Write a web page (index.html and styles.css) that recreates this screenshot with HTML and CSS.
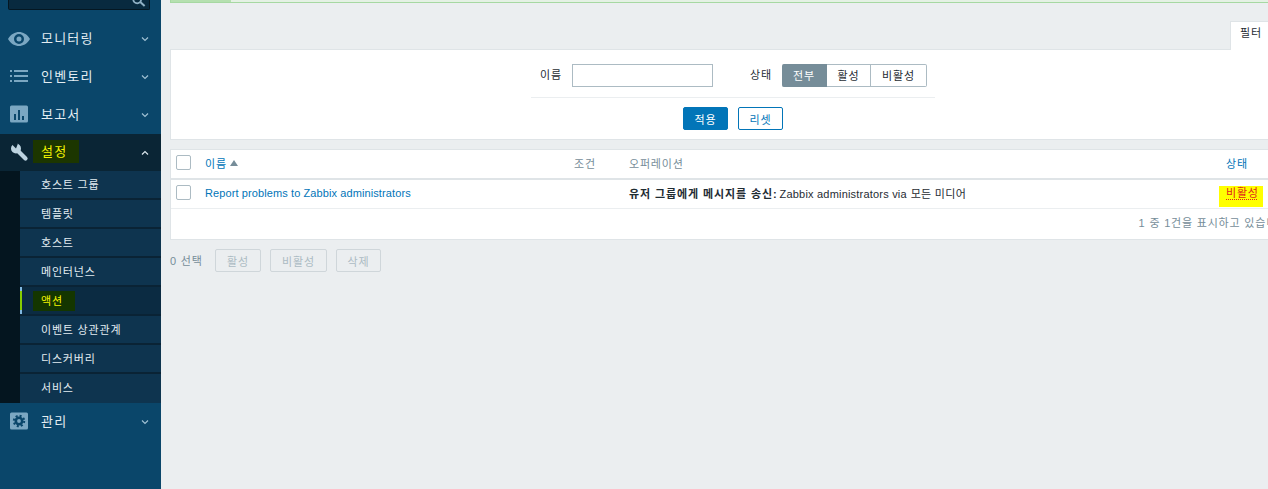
FILE: index.html
```html
<!DOCTYPE html>
<html lang="ko">
<head>
<meta charset="utf-8">
<title>액션</title>
<link rel="stylesheet" href="styles.css">
</head>
<body>
<div class="page">
  <aside class="sidebar">
    <div class="search">
      <svg class="search-icon" viewBox="0 0 16 16"><circle cx="6.500" cy="5" r="4.500" fill="none" stroke="#8fb0c4" stroke-width="2"/><path d="M10 8l5 4.500" stroke="#8fb0c4" stroke-width="2.400"/></svg>
    </div>
    <nav class="menu">
      <div class="item">
        <svg class="icon" viewBox="0 0 22 22"><path fill-rule="evenodd" d="M0 11C3 6 7 4 11 4s8 2 11 7c-3 5-7 7-11 7S3 16 0 11zm11-5a5 5 0 1 0 0 10 5 5 0 0 0 0-10zm0 2.500a2.500 2.500 0 1 1 0 5 2.500 2.500 0 0 1 0-5z" fill="#7ba7c2"/></svg>
        <span class="label">모니터링</span>
        <svg class="chev" viewBox="0 0 8 6"><path d="M1 1.500l3 3 3-3" fill="none" stroke="#9fc0d3" stroke-width="1.200"/></svg>
      </div>
      <div class="item">
        <svg class="icon icon-up" viewBox="0 0 22 22"><path d="M2 5h2v2H2zM2 10h2v2H2zM2 15h2v2H2zM6 5h14v2H6zM6 10h14v2H6zM6 15h14v2H6z" fill="#7ba7c2"/></svg>
        <span class="label">인벤토리</span>
        <svg class="chev" viewBox="0 0 8 6"><path d="M1 1.500l3 3 3-3" fill="none" stroke="#9fc0d3" stroke-width="1.200"/></svg>
      </div>
      <div class="item">
        <svg class="icon icon-up" viewBox="0 0 22 22"><rect x="2" y="2.500" width="18" height="17" rx="1.500" fill="#7ba7c2"/><path d="M6 11h2v6H6zM10 7h2v10h-2zM14 13h2v4h-2z" fill="#0a466a"/></svg>
        <span class="label">보고서</span>
        <svg class="chev" viewBox="0 0 8 6"><path d="M1 1.500l3 3 3-3" fill="none" stroke="#9fc0d3" stroke-width="1.200"/></svg>
      </div>
      <div class="item item-open">
        <svg class="icon" viewBox="0 0 22 22"><circle cx="8" cy="6.500" r="5" fill="#bcd3e0"/><path d="M8 7l9.500 9.500" stroke="#bcd3e0" stroke-width="4.200" stroke-linecap="round"/><path d="M8 6.500L4.500 3 3 .5 7 .5 10 1.500z" fill="#0a2535"/></svg>
        <span class="label"><span class="mark">설정</span></span>
        <svg class="chev" viewBox="0 0 8 6"><path d="M1 4.500l3-3 3 3" fill="none" stroke="#dbe7ee" stroke-width="1.200"/></svg>
      </div>
      <div class="submenu">
        <ul class="sublist">
          <li class="sub">호스트 그룹</li>
          <li class="sub">템플릿</li>
          <li class="sub">호스트</li>
          <li class="sub">메인터넌스</li>
          <li class="sub sub-active"><span class="mark-sub">액션</span></li>
          <li class="sub">이벤트 상관관계</li>
          <li class="sub">디스커버리</li>
          <li class="sub">서비스</li>
        </ul>
      </div>
      <div class="item">
        <svg class="icon icon-up" viewBox="0 0 22 22"><rect x="2" y="2.500" width="18" height="17" rx="1.500" fill="#7ba7c2"/><circle cx="11" cy="11" r="3.200" fill="none" stroke="#0a466a" stroke-width="2.600"/><circle cx="11" cy="11" r="5.200" fill="none" stroke="#0a466a" stroke-width="2" stroke-dasharray="2.040 2.040"/></svg>
        <span class="label">관리</span>
        <svg class="chev" viewBox="0 0 8 6"><path d="M1 1.500l3 3 3-3" fill="none" stroke="#9fc0d3" stroke-width="1.200"/></svg>
      </div>
    </nav>
  </aside>
  <main class="main">
    <div class="notice"><span class="notice-bar"></span></div>
    <div class="tabs"><span class="tab">필터</span></div>
    <section class="filter">
      <div class="filter-fields">
        <label class="flabel">이름</label>
        <input class="text-input" type="text">
        <label class="flabel flabel-status">상태</label>
        <div class="segment">
          <span class="seg seg-on">전부</span>
          <span class="seg">활성</span>
          <span class="seg">비활성</span>
        </div>
      </div>
      <div class="filter-actions">
        <button class="btn btn-primary">적용</button>
        <button class="btn btn-outline">리셋</button>
      </div>
    </section>
    <section class="table">
      <div class="row row-head">
        <span class="check"></span>
        <span class="th-link">이름 <svg class="sort" viewBox="0 0 8 6"><path d="M4 0l4 6H0z" fill="#768d99"/></svg></span>
        <span class="th">조건</span>
        <span class="th">오퍼레이션</span>
        <span class="th-link">상태</span>
      </div>
      <div class="row row-body">
        <span class="check"></span>
        <a class="name">Report problems to Zabbix administrators</a>
        <span></span>
        <span class="op"><b class="op-b">유저 그룹에게 메시지를 송신:</b> <span class="op-en">Zabbix administrators via</span> <span class="op-ko">모든 미디어</span></span>
        <span class="status"><span class="status-text">비활성</span></span>
      </div>
      <div class="table-foot">1 중 1건을 표시하고 있습니다</div>
    </section>
    <div class="actions">
      <span class="selected">0 선택</span>
      <button class="btn-off">활성</button>
      <button class="btn-off">비활성</button>
      <button class="btn-off">삭제</button>
    </div>
  </main>
</div>
</body>
</html>
```
FILE: styles.css
```css
* { box-sizing: border-box; }
html, body { margin: 0; height: 489px; overflow: hidden; }
body {
  font-family: "Liberation Sans", "Noto Sans CJK KR", sans-serif;
  font-size: 11px;
  letter-spacing: .8px;
  color: #1f2c33;
  background: #ebeef0;
}
.page { display: flex; width: 1268px; height: 489px; overflow: hidden; }

.sidebar { flex: 0 0 161px; background: #0a466a; }
.search {
  height: 10px;
  margin: 0 11px 0 8px;
  background: #082a3f;
  border: 1px solid #041722;
  border-top: 0;
  border-radius: 0 0 2px 2px;
  display: flex;
  justify-content: flex-end;
  overflow: hidden;
  padding-right: 3px;
}
.search-icon { width: 15px; height: 14px; margin-top: -5px; }
.menu { padding-top: 10px; }
.item {
  display: flex;
  align-items: center;
  height: 38px;
  padding-left: 8px;
  color: #e4edf2;
  font-size: 13px;
  letter-spacing: 1.2px;
}
.item-open { background: #0a2535; height: 37px; }
.icon { width: 22px; height: 22px; flex: none; }
.icon-up { margin-bottom: 2px; }
.label { width: 100px; margin: 0 0 4px 11px; }
.chev { width: 8px; height: 6px; flex: none; }
.mark {
  background: #1c3600;
  color: #f5f500;
  padding: 4px 12px 4px 8px;
  margin-left: -8px;
}
.submenu { background: #04151f; padding-left: 20px; }
.sublist { list-style: none; margin: 0; padding: 0; }
.sub {
  height: 29px;
  padding: 6px 0 0 21px;
  line-height: 16px;
  color: #e4edf2;
  background: #0e344f;
  border-bottom: 2px solid #0a2335;
}
.sub:last-child { border-bottom: 0; }
.sub-active {
  background:
    linear-gradient(#80b8e0 4px, #86cc00 4px, #86cc00 calc(100% - 4px), #80b8e0 calc(100% - 4px)) left top / 2px 100% no-repeat,
    #0b2b42;
}
.mark-sub {
  background: #143600;
  color: #f5f500;
  padding: 4px 12px 4px 8px;
  margin-left: -8px;
}

.main { flex: 0 0 auto; width: 1126px; margin-left: 9px; }
.notice {
  height: 3px;
  background: #e4f1e4;
  border: 1px solid #a6d8a2;
  border-top: 0;
  display: flex;
  align-items: flex-start;
}
.notice-bar { display: block; width: 60px; height: 2px; background: #b5e0b0; }
.tabs {
  display: flex;
  justify-content: flex-end;
  height: 29px;
  margin: 18px 0 -1px;
  position: relative;
  z-index: 1;
}
.tab {
  width: 66px;
  height: 29px;
  background: #fff;
  border: 1px solid #dfe4e7;
  border-bottom: 0;
  line-height: 22px;
  padding-left: 9px;
}
.filter {
  height: 91px;
  background: #fff;
  border: 1px solid #dfe4e7;
  padding-top: 14px;
  display: flex;
  flex-direction: column;
  align-items: center;
}
.filter-fields {
  width: 404px;
  height: 34px;
  border-bottom: 1px solid #ebeef0;
  display: flex;
  align-items: flex-start;
  padding-left: 9px;
}
.flabel { line-height: 23px; width: 32px; }
.flabel-status { margin-left: 37px; }
.text-input {
  width: 141px;
  height: 23px;
  border: 1px solid #acbbc3;
  background: #fff;
  padding: 0;
}
.segment { display: flex; height: 23px; }
.seg {
  height: 23px;
  line-height: 22px;
  text-align: center;
  width: 44px;
  border: 1px solid #acbbc3;
  border-left: 0;
  background: #fff;
}
.seg:last-child { width: 56px; border-radius: 0 2px 2px 0; }
.seg-on {
  width: 45px;
  background: #768d99;
  border-color: #768d99;
  color: #fff;
  border-radius: 2px 0 0 2px;
}
.filter-actions { display: flex; gap: 10px; margin-top: 9px; }
.btn {
  width: 45px;
  height: 23px;
  font: inherit;
  letter-spacing: inherit;
  padding: 0;
  border-radius: 2px;
  border: 1px solid #0275b8;
}
.btn-primary { background: #0275b8; color: #fff; }
.btn-outline { background: #fff; color: #0275b8; }

.table {
  height: 91px;
  margin-top: 9px;
  background: #fff;
  border: 1px solid #dfe4e7;
}
.row {
  display: grid;
  grid-template-columns: 34px 369px 55px 597px 1fr;
  align-items: center;
}
.row-head { height: 30px; border-bottom: 2px solid #dfe4e7; }
.row-body { height: 29px; border-bottom: 1px solid #ebeef0; }
.row-head > span:not(.check) { margin-bottom: 3px; }
.row-body > span:not(.check):not(.status), .name { margin-bottom: 2px; }
.check {
  width: 15px;
  height: 15px;
  margin: 0 0 3px 5px;
  border: 1px solid #acbbc3;
  border-radius: 2px;
  background: #fff;
}
.th { color: #768d99; }
.th-link { color: #0275b8; display: flex; align-items: center; gap: 3px; }
.sort { width: 8px; height: 6px; }
.name { color: #0275b8; letter-spacing: .1px; }
.op { white-space: nowrap; }
.op-b { letter-spacing: .9px; }
.op-en { letter-spacing: .2px; margin-left: -2px; }
.op-ko { letter-spacing: .3px; }
.status { align-self: start; margin-top: 6px; }
.status-text {
  display: inline-block;
  color: #e0261a;
  background: #ffff00;
  padding: 0 4px 7px 7px;
  margin-left: -7px;
  line-height: 14px;
  text-decoration: underline dotted #e0261a;
  text-underline-offset: 2px;
}
.table-foot {
  text-align: right;
  padding-right: 7px;
  line-height: 29px;
  color: #768d99;
}

.actions {
  display: flex;
  align-items: center;
  margin-top: 9px;
  height: 23px;
  color: #768d99;
}
.selected { width: 45px; margin-bottom: 2px; }
.btn-off {
  font: inherit;
  letter-spacing: inherit;
  height: 23px;
  width: 46px;
  margin-right: 9px;
  padding: 0;
  background: #ebeef0;
  border: 1px solid #cfd6da;
  border-radius: 2px;
  color: #acbbc3;
}
.btn-off:nth-of-type(2) { width: 57px; }
.btn-off:nth-of-type(3) { width: 45px; }
```
